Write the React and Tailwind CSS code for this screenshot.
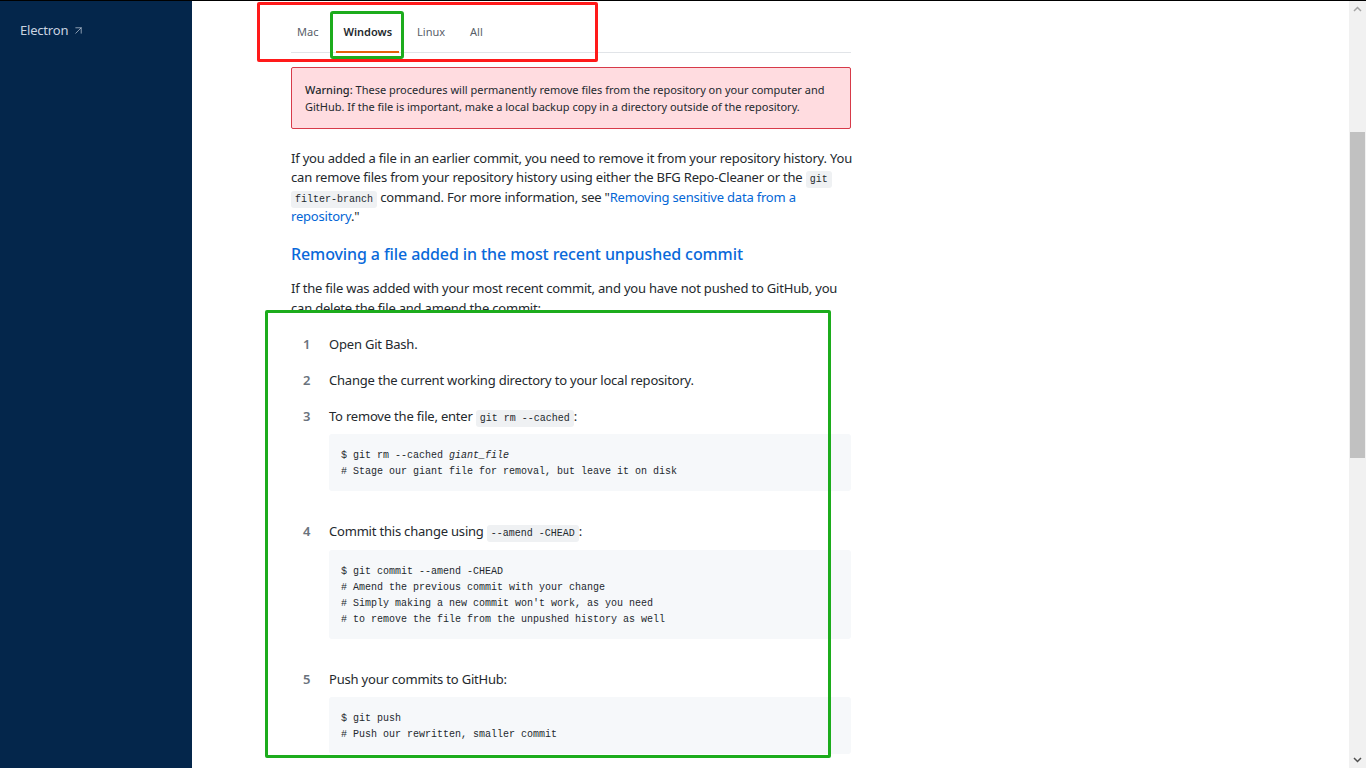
import React from 'react';
import { ArrowUpRight } from 'lucide-react';

const sans = { fontFamily: '"Segoe UI", "Noto Sans", sans-serif' };
const mono = { fontFamily: '"Liberation Mono", monospace' };

function InlineCode({ children }) {
    return (
        <code className="bg-[#eff1f3] rounded-[3px] px-[4px] py-[3px] text-[10px] leading-none tracking-normal text-[#24292e]" style={mono}>
            {children}
        </code>
    );
}

function CodeBlock({ lines }) {
    return (
        <pre className="mt-[8px] bg-[#f6f8fa] rounded-[3px] pl-[12px] pt-[14px] pb-[11px] text-[10px] leading-[16px] tracking-normal text-[#24292e]" style={mono}>
            {lines.map((l, i) => <div key={i}>{l}</div>)}
        </pre>
    );
}

function Step({ n, children, code }) {
    return (
        <li className={`flex mt-[16.5px] ${code ? 'pb-[14.5px]' : ''}`}>
            <span className="w-[38px] shrink-0 pl-[12px] font-semibold text-[#6a737d]">{n}</span>
            <div className="flex-1">
                <div>{children}</div>
                {code && <CodeBlock lines={code} />}
            </div>
        </li>
    );
}

const tabs = ['Mac', 'Windows', 'Linux', 'All'];

export default function App() {
    return (
        <div className="relative h-screen w-full overflow-hidden bg-white" style={sans}>
            <div className="h-px bg-black" />
            <div className="flex h-[767px]">
                <aside className="w-[192px] shrink-0 bg-[#04264b]">
                    <div className="flex items-center gap-[4px] pl-[20px] pt-[20px] text-[13px] tracking-[-0.2px] text-[#c9d3e0]">
                        Electron <ArrowUpRight size={13} strokeWidth={1.25} />
                    </div>
                </aside>

                <main className="flex-1">
                    <div className="ml-[99px] w-[560px] text-[13px] leading-[19.5px] tracking-[-0.2px] text-[#24292e]">
                        <div className="flex gap-[11px] border-b border-[#e1e4e8] text-[11px] leading-4 tracking-normal">
                            {tabs.map(t => (
                                <div
                                    key={t}
                                    className={`px-[7px] pt-[23px] pb-[11px] border-b-2 -mb-px ${t === 'Windows' ? 'border-[#e36209] text-[#24292e] font-semibold' : 'border-transparent text-[#586069]'} ${t === 'Mac' ? '-ml-px' : ''}`}
                                >
                                    {t}
                                </div>
                            ))}
                        </div>

                        <div className="mt-[14px] border border-[#d73a49] bg-[#ffdce0] rounded-[2px] pl-[13px] py-[13px] text-[11px] leading-[17px] tracking-normal text-[#24292e]">
                            <span className="font-medium">Warning:</span> These procedures will permanently remove files from the repository on your computer and<br />
                            GitHub. If the file is important, make a local backup copy in a directory outside of the repository.
                        </div>

                        <p className="mt-[19.5px] whitespace-nowrap">
                            If you added a file in an earlier commit, you need to remove it from your repository history. You<br />
                            can remove files from your repository history using either the BFG Repo-Cleaner or the <InlineCode>git</InlineCode><br />
                            <InlineCode>filter-branch</InlineCode> command. For more information, see "<span className="text-[#0366d6]">Removing sensitive data from a</span><br />
                            <span className="text-[#0366d6]">repository</span>."
                        </p>

                        <h3 className="mt-[15.5px] text-[16px] leading-[24px] font-medium tracking-[-0.1px] text-[#0969da]">
                            Removing a file added in the most recent unpushed commit
                        </h3>

                        <p className="mt-[13px] whitespace-nowrap">
                            If the file was added with your most recent commit, and you have not pushed to GitHub, you<br />
                            can delete the file and amend the commit:
                        </p>

                        <ol className="mt-[3.5px]">
                            <Step n={1}>Open Git Bash.</Step>
                            <Step n={2}>Change the current working directory to your local repository.</Step>
                            <Step
                                n={3}
                                code={[
                                    <>$ git rm --cached <i>giant_file</i></>,
                                    '# Stage our giant file for removal, but leave it on disk',
                                ]}
                            >
                                To remove the file, enter <InlineCode>git rm --cached</InlineCode>:
                            </Step>
                            <Step
                                n={4}
                                code={[
                                    '$ git commit --amend -CHEAD',
                                    '# Amend the previous commit with your change',
                                    "# Simply making a new commit won't work, as you need",
                                    '# to remove the file from the unpushed history as well',
                                ]}
                            >
                                Commit this change using <InlineCode>--amend -CHEAD</InlineCode>:
                            </Step>
                            <Step
                                n={5}
                                code={['$ git push', '# Push our rewritten, smaller commit']}
                            >
                                Push your commits to GitHub:
                            </Step>
                        </ol>
                    </div>
                </main>

                <div className="w-[17px] shrink-0 bg-[#f1f1f1] flex flex-col items-center">
                    <svg width="9" height="6" viewBox="0 0 9 6" className="mt-[5px]"><path d="M1 5 L4.5 1.5 L8 5" fill="none" stroke="#a3a3a3" strokeWidth="1.5" /></svg>
                    <div className="mt-[120px] h-[326px] w-[15px] bg-[#c1c1c1]" />
                    <div className="flex-1" />
                    <svg width="9" height="6" viewBox="0 0 9 6" className="mb-[5px]"><path d="M1 1 L4.5 4.5 L8 1" fill="none" stroke="#505050" strokeWidth="1.5" /></svg>
                </div>
            </div>

            {/* annotation boxes */}
            <div className="absolute left-[257px] top-[2px] w-[341px] h-[60px] border-[3px] border-[#ff1a1a] rounded-[2px]" />
            <div className="absolute left-[330px] top-[11px] w-[74px] h-[48px] border-[3px] border-[#1cac1c] rounded-[3px]" />
            <div className="absolute left-[265px] top-[310px] w-[566px] h-[448px] border-[3px] border-[#1cac1c] rounded-[2px]" />
        </div>
    );
}
